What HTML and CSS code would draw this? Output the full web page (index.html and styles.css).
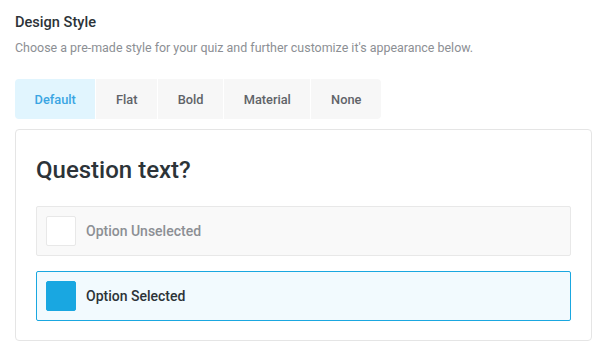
FILE: index.html
```html
<!DOCTYPE html>
<html>
<head>
<meta charset="utf-8">
<link rel="stylesheet" href="styles.css">
</head>
<body>
<div class="page">
  <h2 class="title">Design Style</h2>
  <p class="desc">Choose a pre-made style for your quiz and further customize it's appearance below.</p>
  <div class="tabs">
    <div class="tab active">Default</div>
    <div class="tab">Flat</div>
    <div class="tab">Bold</div>
    <div class="tab">Material</div>
    <div class="tab">None</div>
  </div>
  <div class="card">
    <h1 class="question">Question text?</h1>
    <div class="option">
      <span class="box"></span>
      <span class="label">Option Unselected</span>
    </div>
    <div class="option selected">
      <span class="box"></span>
      <span class="label">Option Selected</span>
    </div>
  </div>
</div>
</body>
</html>
```

FILE: styles.css
```css
html, body {
  margin: 0;
  padding: 0;
  background: #fff;
}
body {
  font-family: Roboto, "Liberation Sans", sans-serif;
}
.page {
  padding: 11px 18px 0 15px;
}
.title {
  margin: 0;
  font-size: 14.6px;
  font-weight: 500;
  line-height: 22px;
  color: #2c3338;
}
.desc {
  margin: 6px 0 0;
  font-size: 12.45px;
  line-height: 18px;
  color: #8c8f94;
}
.tabs {
  display: flex;
  gap: 1px;
  margin-top: 22px;
  width: max-content;
  border-radius: 4px;
  overflow: hidden;
}
.tab {
  height: 40px;
  display: flex;
  align-items: center;
  justify-content: center;
  padding: 0 19.6px;
  background: #f7f7f7;
  font-size: 12.8px;
  font-weight: 500;
  color: #5f6368;
}
.tab.active {
  background: #e1f5fe;
  color: #3aa5e3;
}
.card {
  margin-top: 10px;
  border: 1px solid #e5e5e5;
  border-radius: 4px;
  padding: 20px 20px 19px;
}
.question {
  margin: 0 0 16px;
  font-size: 24px;
  font-weight: 500;
  line-height: 40px;
  color: #2c3338;
}
.option {
  display: flex;
  align-items: center;
  gap: 10px;
  height: 48px;
  padding: 0 9px;
  border: 1px solid #e8e8e8;
  border-radius: 2px;
  background: #f9f9f9;
}
.option + .option {
  margin-top: 15px;
}
.box {
  width: 28px;
  height: 28px;
  background: #fff;
  border: 1px solid #e8e8e8;
  border-radius: 2px;
}
.label {
  font-size: 14px;
  font-weight: 500;
  color: #8c8f94;
}
.option.selected {
  background: #f2fafe;
  border-color: #1aa7e0;
}
.option.selected .box {
  background: #19a7e1;
  border-color: #19a7e1;
}
.option.selected .label {
  color: #2c3338;
}
```
